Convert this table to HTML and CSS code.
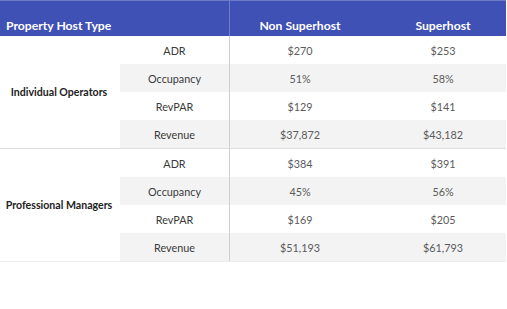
FILE: index.html
```html
<!DOCTYPE html>
<html>
<head>
<meta charset="utf-8">
<link rel="stylesheet" href="styles.css">
</head>
<body>
<div class="table">
  <div class="head">
    <div class="h-type">Property Host Type</div>
    <div class="h-col">Non Superhost</div>
    <div class="h-col h-last">Superhost</div>
  </div>
  <div class="group">
    <div class="g-label">Individual Operators</div>
    <div class="rows">
      <div class="row"><div class="metric">ADR</div><div class="v">$270</div><div class="v v-last">$253</div></div>
      <div class="row alt"><div class="metric">Occupancy</div><div class="v">51%</div><div class="v v-last">58%</div></div>
      <div class="row"><div class="metric">RevPAR</div><div class="v">$129</div><div class="v v-last">$141</div></div>
      <div class="row alt"><div class="metric">Revenue</div><div class="v">$37,872</div><div class="v v-last">$43,182</div></div>
    </div>
  </div>
  <div class="group">
    <div class="g-label">Professional Managers</div>
    <div class="rows">
      <div class="row"><div class="metric">ADR</div><div class="v">$384</div><div class="v v-last">$391</div></div>
      <div class="row alt"><div class="metric">Occupancy</div><div class="v">45%</div><div class="v v-last">56%</div></div>
      <div class="row"><div class="metric">RevPAR</div><div class="v">$169</div><div class="v v-last">$205</div></div>
      <div class="row alt"><div class="metric">Revenue</div><div class="v">$51,193</div><div class="v v-last">$61,793</div></div>
    </div>
  </div>
</div>
</body>
</html>
```

FILE: styles.css
```css
html, body {
  margin: 0;
  padding: 0;
  background: #ffffff;
}
body {
  font-family: Lato, "Liberation Sans", sans-serif;
}
.table {
  width: 506px;
  display: flex;
  flex-direction: column;
}
.head {
  display: flex;
  height: 36px;
  background: #3f51b5;
  color: #ffffff;
  font-weight: 700;
  font-size: 12.2px;
  border-top: 1px solid #6d7bc8;
  box-sizing: border-box;
}
.h-type {
  width: 230px;
  box-sizing: border-box;
  padding: 0 0 3px 6px;
  display: flex;
  align-items: flex-end;
  border-right: 1px solid #6f7cc6;
}
.h-col {
  width: 140px;
  display: flex;
  align-items: flex-end;
  justify-content: center;
  padding-bottom: 3px;
}
.h-last {
  width: 136px;
  padding-left: 10px;
  box-sizing: border-box;
}
.group {
  display: flex;
  border-bottom: 1px solid #dedede;
}
.group + .group {
  border-bottom-color: #ececec;
}
.g-label {
  width: 118px;
  padding-right: 2px;
  display: flex;
  align-items: center;
  justify-content: center;
  font-weight: 700;
  font-size: 10.6px;
  color: #222222;
  white-space: nowrap;
}
.rows {
  flex: 1;
  display: flex;
  flex-direction: column;
}
.row {
  display: flex;
  height: 28px;
  align-items: center;
  font-size: 10.8px;
}
.row.alt {
  background: #f3f3f3;
}
.metric {
  width: 110px;
  height: 100%;
  box-sizing: border-box;
  display: flex;
  align-items: center;
  justify-content: center;
  color: #3a3a3a;
  border-right: 1px solid #cfcfcf;
}
.v {
  width: 140px;
  text-align: center;
  color: #5a5a5a;
}
.v-last {
  width: 136px;
  padding-left: 10px;
  box-sizing: border-box;
}
```
